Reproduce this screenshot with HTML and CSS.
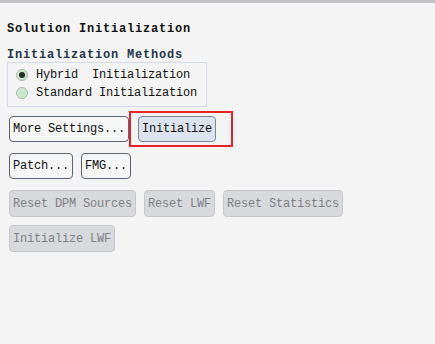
FILE: index.html
```html
<!DOCTYPE html>
<html>
<head>
	<meta charset="UTF-8">
	<title>Solution Initialization</title>
	<link rel="stylesheet" href="styles.css">
</head>
<body>
	<div class="topbar"></div>
	<div class="panel">
		<h1 class="title">Solution Initialization</h1>
		<p class="group-label">Initialization Methods</p>
		<div class="group">
			<label class="radio"><span class="dot checked"></span>Hybrid&nbsp; Initialization</label>
			<label class="radio"><span class="dot"></span>Standard Initialization</label>
		</div>
		<div class="row first">
			<button class="btn">More Settings...</button>
			<span class="highlight"><button class="btn primary">Initialize</button></span>
		</div>
		<div class="row">
			<button class="btn">Patch...</button>
			<button class="btn">FMG...</button>
		</div>
		<div class="row">
			<button class="btn off">Reset DPM Sources</button>
			<button class="btn off">Reset LWF</button>
			<button class="btn off">Reset Statistics</button>
		</div>
		<div class="row last">
			<button class="btn off">Initialize LWF</button>
		</div>
	</div>
</body>
</html>
```

FILE: styles.css
```css
* {
	box-sizing: border-box;
}
body {
	margin: 0;
	padding: 0;
	background-color: #f4f4f4;
	font-family: "Liberation Mono", monospace;
	font-size: 12px;
	letter-spacing: -0.2px;
	color: #111;
	height: 344px;
	overflow: hidden;
}
.topbar {
	height: 3px;
	background-color: #bfc1c4;
}
.panel {
	padding: 0 0 0 7px;
}
.title {
	margin: 18px 0 0 0;
	font-size: 12px;
	font-weight: bold;
	letter-spacing: 0.8px;
	line-height: 16px;
	color: #111;
}
.group-label {
	margin: 11px 0 0 0;
	font-weight: bold;
	letter-spacing: 0.8px;
	line-height: 14px;
	color: #26364a;
}
.group {
	width: 200px;
	margin-top: 0;
	border: 1px solid #d3d9e8;
	padding: 4px 0 5px 8px;
	display: flex;
	flex-direction: column;
	gap: 2px;
}
.radio {
	display: flex;
	align-items: center;
	height: 16px;
	line-height: 16px;
}
.dot {
	width: 12px;
	height: 12px;
	border-radius: 50%;
	border: 1px solid #a9b7a9;
	background-color: #cde7cd;
	margin-right: 8px;
	display: flex;
	align-items: center;
	justify-content: center;
}
.dot.checked::after {
	content: "";
	width: 6px;
	height: 6px;
	border-radius: 50%;
	background-color: #262a28;
}
.row {
	display: flex;
	align-items: center;
	gap: 8px;
	margin-top: 11px;
	padding-left: 2px;
}
.row.first {
	margin-top: 9px;
}
.row.last {
	margin-top: 8px;
}
.btn {
	font-family: "Liberation Mono", monospace;
	font-size: 12px;
	letter-spacing: -0.2px;
	height: 26px;
	padding: 0 3px;
	border: 1px solid #5c6472;
	border-radius: 4px;
	background-color: #f6f6f6;
	color: #111;
}
.btn.primary {
	background-color: #dde3ec;
	border-color: #7c8696;
}
.btn.off {
	height: 27px;
	background-color: #d8d9dc;
	border-color: #c5c7cb;
	color: #7d7f82;
}
.highlight {
	display: flex;
	padding: 3px 15px 3px 7px;
	border: 2px solid #e8222b;
	margin: -6px 0 -6px -8px;
}
```
